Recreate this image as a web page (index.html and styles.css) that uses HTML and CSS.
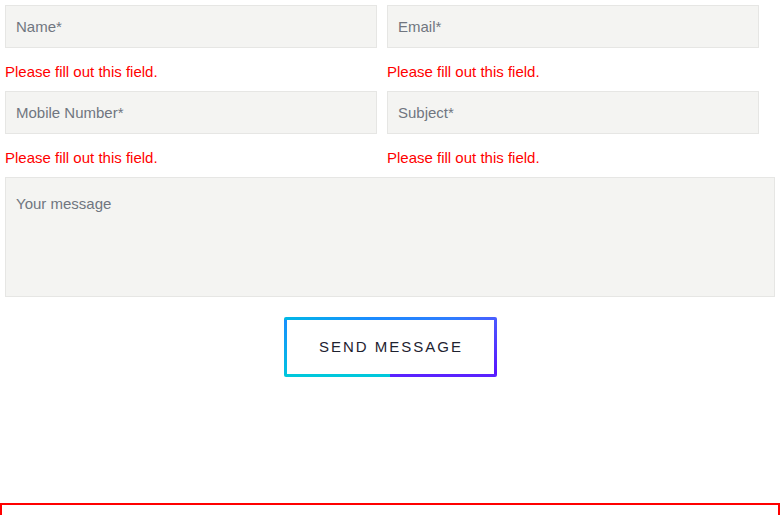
FILE: index.html
```html
<!DOCTYPE html>
<html>
<head>
<meta charset="utf-8">
<link rel="stylesheet" href="styles.css">
</head>
<body>
<form class="form">
  <div class="grid">
    <div class="cell">
      <input class="field" type="text" placeholder="Name*">
      <div class="error">Please fill out this field.</div>
    </div>
    <div class="cell">
      <input class="field" type="text" placeholder="Email*">
      <div class="error">Please fill out this field.</div>
    </div>
    <div class="cell">
      <input class="field" type="text" placeholder="Mobile Number*">
      <div class="error">Please fill out this field.</div>
    </div>
    <div class="cell">
      <input class="field" type="text" placeholder="Subject*">
      <div class="error">Please fill out this field.</div>
    </div>
  </div>
  <textarea class="message" placeholder="Your message"></textarea>
  <div class="actions">
    <button class="send" type="button">SEND MESSAGE</button>
  </div>
</form>
<div class="redbox"></div>
</body>
</html>
```

FILE: styles.css
```css
html, body {
  margin: 0;
  padding: 0;
  background: #fff;
  font-family: "Liberation Sans", Arial, sans-serif;
  overflow: hidden;
}
.form {
  padding: 5px 5px 0 5px;
}
.grid {
  display: grid;
  grid-template-columns: 372px 372px;
  column-gap: 10px;
}
.field {
  display: block;
  box-sizing: border-box;
  width: 100%;
  height: 43px;
  margin: 0;
  padding: 0 10px;
  background: #f4f4f2;
  border: 1px solid #e6e6e4;
  border-radius: 0;
  font-family: "Liberation Sans", Arial, sans-serif;
  font-size: 15px;
  color: #333;
  outline: none;
}
.field::placeholder, .message::placeholder {
  color: #707680;
  opacity: 1;
}
.error {
  box-sizing: border-box;
  height: 43px;
  padding-top: 15px;
  font-size: 15px;
  line-height: 17px;
  color: #ff0000;
}
.message {
  display: block;
  box-sizing: border-box;
  width: 770px;
  height: 120px;
  margin: 0;
  padding: 17px 10px;
  background: #f4f4f2;
  border: 1px solid #e6e6e4;
  border-radius: 0;
  font-family: "Liberation Sans", Arial, sans-serif;
  font-size: 15px;
  line-height: 17px;
  resize: none;
  outline: none;
}
.actions {
  display: flex;
  justify-content: center;
  padding-top: 20px;
}
.send {
  box-sizing: border-box;
  width: 213px;
  height: 60px;
  margin: 0;
  border: none;
  border-radius: 2px;
  padding: 0 0 1px 2px;
  font-family: "Liberation Sans", Arial, sans-serif;
  font-size: 15px;
  letter-spacing: 2px;
  color: #1e2230;
  cursor: pointer;
  background:
    linear-gradient(90deg, #00b8e6, #1a8cff 40%, #2f7cff 80%, #4a5cff) top / 100% 3px no-repeat,
    linear-gradient(90deg, #00c8dc 50%, #5a22ff 50%) bottom / 100% 3px no-repeat,
    linear-gradient(180deg, #1a8cff, #00c4e0) left / 3px 100% no-repeat,
    linear-gradient(180deg, #4a5cff, #5a10ff) right / 3px 100% no-repeat,
    #fff;
}
.redbox {
  box-sizing: border-box;
  margin-top: 126px;
  width: 780px;
  height: 40px;
  border: 2px solid #ff0000;
}
```
